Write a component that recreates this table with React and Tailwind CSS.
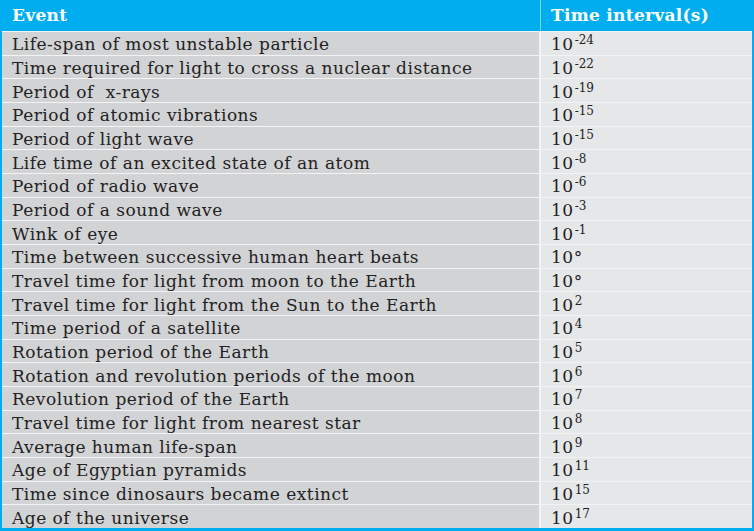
const rows = [
  ['Life-span of most unstable particle', '10', '-24'],
  ['Time required for light to cross a nuclear distance', '10', '-22'],
  ['Period of  x-rays', '10', '-19'],
  ['Period of atomic vibrations', '10', '-15'],
  ['Period of light wave', '10', '-15'],
  ['Life time of an excited state of an atom', '10', '-8'],
  ['Period of radio wave', '10', '-6'],
  ['Period of a sound wave', '10', '-3'],
  ['Wink of eye', '10', '-1'],
  ['Time between successive human heart beats', '10°', ''],
  ['Travel time for light from moon to the Earth', '10°', ''],
  ['Travel time for light from the Sun to the Earth', '10', '2'],
  ['Time period of a satellite', '10', '4'],
  ['Rotation period of the Earth', '10', '5'],
  ['Rotation and revolution periods of the moon', '10', '6'],
  ['Revolution period of the Earth', '10', '7'],
  ['Travel time for light from nearest star', '10', '8'],
  ['Average human life-span', '10', '9'],
  ['Age of Egyptian pyramids', '10', '11'],
  ['Time since dinosaurs became extinct', '10', '15'],
  ['Age of the universe', '10', '17'],
];

export default function App() {
  return (
    <div className="w-[754px] h-[531px] flex flex-col bg-[#00aeef] border-x-2 border-b-[3px] border-[#00aeef] font-['DejaVu_Serif',serif] text-[#222]">
      <div className="h-[31px] flex text-white font-bold text-[17px] tracking-[0.3px] shrink-0">
        <div className="w-[539px] pl-[10px] flex items-center border-r border-[#7fd4f5]">Event</div>
        <div className="flex-1 pl-[10px] flex items-center">Time interval(s)</div>
      </div>
      <div className="flex-1 min-h-0 grid grid-cols-[539px_1fr] grid-rows-[repeat(21,minmax(0,1fr))] gap-y-px pt-px bg-[#f3f3f4] text-[17px] leading-[20px] tracking-[0.5px]">
        {rows.map(([event, base, exp]) => (
          <div key={event} className="contents">
            <div className="bg-[#d2d3d5] pl-[10px] pt-[2px] flex items-center border-r-2 border-[#f3f3f4] whitespace-pre">{event}</div>
            <div className="bg-[#e6e7e9] pl-[10px] pt-[2px] flex items-center">
              <span>{base}</span>
              {exp && <span className="text-[12px] tracking-normal -translate-y-[4px] ml-px">{exp}</span>}
            </div>
          </div>
        ))}
      </div>
    </div>
  );
}
